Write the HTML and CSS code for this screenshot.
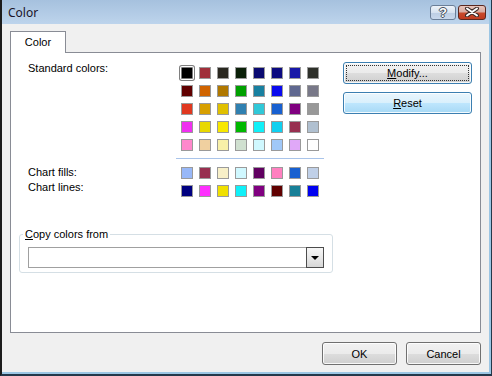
FILE: index.html
```html
<!DOCTYPE html>
<html lang="en">
<head>
    <meta charset="UTF-8">
    <title>Color</title>
    <link rel="stylesheet" href="styles.css">
</head>
<body>

    <div class="frame">
        <div class="window">

            <div class="titlebar">
                <span class="title">Color</span>
                <div class="caption-buttons">
                    <span class="cap-btn help">?</span>
                    <span class="cap-btn close">
                        <svg width="16" height="10" viewBox="0 0 16 10">
                            <path d="M3 1.5 L13 8.5 M13 1.5 L3 8.5" stroke="#3b2b28" stroke-width="4" stroke-linecap="round"/>
                            <path d="M3 1.5 L13 8.5 M13 1.5 L3 8.5" stroke="#ffffff" stroke-width="2" stroke-linecap="round"/>
                        </svg>
                    </span>
                </div>
            </div>

            <div class="client">
                <div class="tabs">
                    <div class="tab">Color</div>
                </div>

                <div class="panel">
                    <div class="picker">
                        <div class="label std-label">Standard colors:</div>
                        <div class="swatches standard">
                            <span class="sw selected" style="background:#000000"></span>
                            <span class="sw" style="background:#a0303a"></span>
                            <span class="sw" style="background:#2a2820"></span>
                            <span class="sw" style="background:#0a2008"></span>
                            <span class="sw" style="background:#0a0a70"></span>
                            <span class="sw" style="background:#0c0a80"></span>
                            <span class="sw" style="background:#1818a8"></span>
                            <span class="sw" style="background:#2e302a"></span>

                            <span class="sw" style="background:#600000"></span>
                            <span class="sw" style="background:#d06400"></span>
                            <span class="sw" style="background:#b07800"></span>
                            <span class="sw" style="background:#00a000"></span>
                            <span class="sw" style="background:#1880a0"></span>
                            <span class="sw" style="background:#0a0aee"></span>
                            <span class="sw" style="background:#606890"></span>
                            <span class="sw" style="background:#787888"></span>

                            <span class="sw" style="background:#e03820"></span>
                            <span class="sw" style="background:#d8a000"></span>
                            <span class="sw" style="background:#e0c000"></span>
                            <span class="sw" style="background:#3080b0"></span>
                            <span class="sw" style="background:#30c8d8"></span>
                            <span class="sw" style="background:#1860d0"></span>
                            <span class="sw" style="background:#800080"></span>
                            <span class="sw" style="background:#989898"></span>

                            <span class="sw" style="background:#f030f0"></span>
                            <span class="sw" style="background:#e8d800"></span>
                            <span class="sw" style="background:#f8e800"></span>
                            <span class="sw" style="background:#00b800"></span>
                            <span class="sw" style="background:#10f0f8"></span>
                            <span class="sw" style="background:#10d0f0"></span>
                            <span class="sw" style="background:#983050"></span>
                            <span class="sw" style="background:#b0c0d0"></span>

                            <span class="sw" style="background:#ff88cc"></span>
                            <span class="sw" style="background:#f0d0a0"></span>
                            <span class="sw" style="background:#f8f0a8"></span>
                            <span class="sw" style="background:#d0e0d0"></span>
                            <span class="sw" style="background:#d0f8ff"></span>
                            <span class="sw" style="background:#a0c8f8"></span>
                            <span class="sw" style="background:#e0a8f8"></span>
                            <span class="sw" style="background:#ffffff"></span>
                        </div>

                        <div class="actions">
                            <button class="btn focused"><span class="focus-rect"><u>M</u>odify...</span></button>
                            <button class="btn hot"><u>R</u>eset</button>
                        </div>

                        <div class="separator"></div>

                        <div class="label chart-labels">
                            <div>Chart fills:</div>
                            <div>Chart lines:</div>
                        </div>
                        <div class="chart-rows">
                            <div class="swatches">
                                <span class="sw" style="background:#98b8f8"></span>
                                <span class="sw" style="background:#983050"></span>
                                <span class="sw" style="background:#f8f0c8"></span>
                                <span class="sw" style="background:#d0f8ff"></span>
                                <span class="sw" style="background:#600060"></span>
                                <span class="sw" style="background:#ff80c0"></span>
                                <span class="sw" style="background:#1860d0"></span>
                                <span class="sw" style="background:#c0d0e8"></span>
                            </div>
                            <div class="swatches">
                                <span class="sw" style="background:#000080"></span>
                                <span class="sw" style="background:#ff30ff"></span>
                                <span class="sw" style="background:#f0e000"></span>
                                <span class="sw" style="background:#10f0f8"></span>
                                <span class="sw" style="background:#800080"></span>
                                <span class="sw" style="background:#600000"></span>
                                <span class="sw" style="background:#188098"></span>
                                <span class="sw" style="background:#0000f0"></span>
                            </div>
                        </div>
                    </div>

                    <fieldset class="group">
                        <legend><u>C</u>opy colors from</legend>
                        <div class="combo">
                            <div class="combo-field"></div>
                            <div class="combo-arrow"></div>
                        </div>
                    </fieldset>
                </div>

                <div class="footer">
                    <button class="btn">OK</button>
                    <button class="btn">Cancel</button>
                </div>
            </div>

        </div>
    </div>

</body>
</html>
```

FILE: styles.css
```css
/* Basic reset */
* {
    box-sizing: border-box;
}

html, body {
    margin: 0;
    padding: 0;
    height: 100%;
    overflow: hidden;
}

body {
    font-family: "Liberation Sans", Arial, sans-serif;
    font-size: 11px;
    color: #000;
    background: #1c1c1c;
}

/* Window frame */
.frame {
    width: 492px;
    height: 376px;
    border-left: 2px solid #1c1c1c;
    border-right: 1px solid #24384a;
    border-bottom: 2px solid #24384a;
}

.window {
    height: 100%;
    display: flex;
    flex-direction: column;
    background: #f0f0f0;
    border-right: 2px solid #9cc6e4;
    border-bottom: 2px solid #9cc6e4;
}

/* Title bar */
.titlebar {
    height: 24px;
    display: flex;
    align-items: center;
    justify-content: space-between;
    padding: 0 3px 0 6px;
    background: linear-gradient(#a6c1de, #bdd4ec);
}

.title {
    font-family: "Noto Sans", "Liberation Sans", sans-serif;
    font-size: 12px;
    color: #1a1428;
}

.caption-buttons {
    display: flex;
    gap: 2px;
}

.cap-btn {
    height: 15px;
    border-radius: 3px;
    display: flex;
    align-items: center;
    justify-content: center;
}

.help {
    width: 26px;
    border: 1px solid #6b7f98;
    background: linear-gradient(#eef3f9 0%, #d6e2f0 50%, #bccde3 51%, #c8d8ec 100%);
    color: #fff;
    font-weight: bold;
    font-size: 13px;
    text-shadow: 0 0 1px #2c3440, 1px 0 0 #4a5566, -1px 0 0 #4a5566, 0 1px 0 #4a5566, 0 -1px 0 #4a5566;
}

.close {
    width: 28px;
    border: 1px solid #5a2820;
    background: linear-gradient(#e8c4bc 0%, #d8aca2 45%, #c84a2c 55%, #c03a1e 100%);
}

/* Client area */
.client {
    flex: 1;
    display: flex;
    flex-direction: column;
    padding: 7px 8px 7px 8px;
}

.tabs {
    display: flex;
    height: 22px;
    margin-bottom: -1px;
    position: relative;
    z-index: 1;
}

.tab {
    width: 56px;
    height: 22px;
    background: #fff;
    border: 1px solid #898c95;
    border-bottom: none;
    text-align: center;
    line-height: 20px;
}

.panel {
    flex: 1;
    background: #fff;
    border: 1px solid #898c95;
    padding: 9px 8px 0 8px;
}

/* Color picker grid */
.picker {
    display: grid;
    grid-template-columns: 153px 162px 129px;
    margin-left: 9px;
}

.label {
    line-height: 13px;
}

.swatches {
    display: grid;
    grid-template-columns: repeat(8, 12px);
    grid-auto-rows: 12px;
    gap: 6px;
}

.swatches.standard {
    margin-top: 5px;
}

.sw {
    display: block;
    width: 12px;
    height: 12px;
    border: 1px solid #9a9a9a;
}

.sw.selected {
    border-color: #7a7a7a;
    box-shadow: 0 0 0 1px #fff, 0 0 0 2px #7f7f7f;
    border-radius: 1px;
}

.actions {
    display: flex;
    flex-direction: column;
    gap: 8px;
}

.actions .btn {
    width: 129px;
    height: 22px;
}

.separator {
    grid-column: 2;
    width: 148px;
    height: 1px;
    margin: 7px 0 8px -5px;
    background: #a9c4ea;
}

.chart-labels {
    grid-column: 1;
    line-height: 15px;
    margin-top: -2px;
}

.chart-rows {
    display: flex;
    flex-direction: column;
    gap: 6px;
}

/* Buttons */
.btn {
    font: inherit;
    color: #000;
    padding: 0;
    border: 1px solid #707070;
    border-radius: 3px;
    background: linear-gradient(#f2f2f2 0%, #ebebeb 50%, #dddddd 51%, #cfcfcf 100%);
    box-shadow: inset 0 0 0 1px rgba(255, 255, 255, 0.85);
    display: flex;
    align-items: center;
    justify-content: center;
}

.btn.focused {
    border-color: #3c7fb1;
    padding: 2px;
}

.focus-rect {
    display: flex;
    align-items: center;
    justify-content: center;
    width: 100%;
    height: 100%;
    border: 1px dotted #333;
}

.btn.hot {
    border-color: #3c7fb1;
    background: linear-gradient(#eaf6fd 0%, #d9f0fc 50%, #bee6fd 51%, #a7d9f5 100%);
}

/* Copy colors group */
.group {
    width: 314px;
    margin: 31px 0 0 0;
    padding: 6px 8px 4px 8px;
    border: 1px solid #d5dfe5;
    border-radius: 3px;
    min-inline-size: 0;
}

.group legend {
    padding: 0 2px;
    margin-left: -5px;
    line-height: 13px;
}

.combo {
    display: flex;
    height: 21px;
    border: 1px solid #a0a0a0;
    border-right: none;
    background: #fff;
}

.combo-field {
    flex: 1;
}

.combo-arrow {
    width: 18px;
    margin: -1px 0;
    border: 1px solid #4c4c4c;
    background: linear-gradient(#f6f6f6 0%, #e8e8e8 50%, #d6d6d6 100%);
    display: flex;
    align-items: center;
    justify-content: center;
}

.combo-arrow::after {
    content: "";
    border-left: 4px solid transparent;
    border-right: 4px solid transparent;
    border-top: 4px solid #000;
    margin-top: 1px;
}

/* Footer */
.footer {
    display: flex;
    justify-content: flex-end;
    gap: 9px;
    margin-top: 9px;
}

.footer .btn {
    width: 75px;
    height: 23px;
}
```
